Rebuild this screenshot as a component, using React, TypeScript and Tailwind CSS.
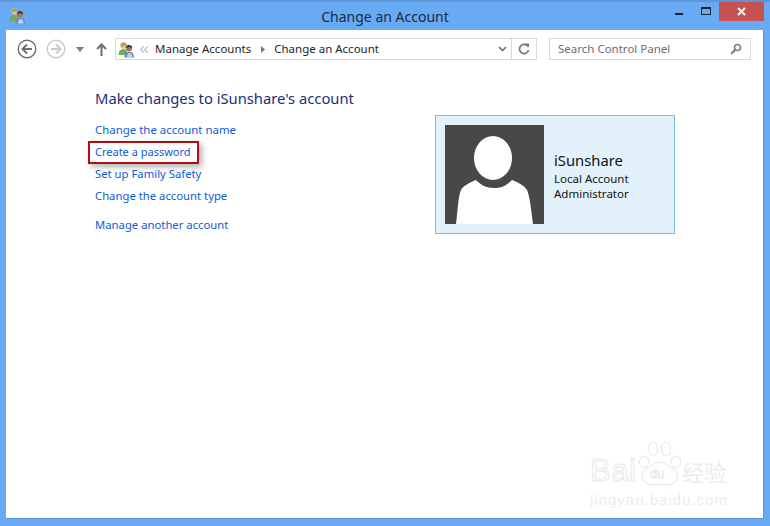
import React from "react";

const FONT = "font-['Noto_Sans','Open_Sans',sans-serif]";

// two little users, used in the title bar and in the address bar
const UsersIcon = () => (
  <svg width="17" height="17" viewBox="0 0 17 17" className="shrink-0">
    <circle cx="5.5" cy="4.5" r="3.2" fill="#d9c48a" />
    <path d="M2.5 4 Q5 -0.5 8.5 3 L8.5 5 Q5.5 3 3.5 6 Z" fill="#a89a5a" />
    <path d="M0.5 14 Q0.5 8 5.5 8 Q8 8 9 10 L8 14 Z" fill="#6fae5a" />
    <circle cx="11" cy="7" r="3.2" fill="#a9714e" />
    <path d="M7.8 6.5 Q11 2 14.2 6.5 L13.5 7 Q11 5 8.5 7 Z" fill="#3b2a20" />
    <path d="M6.5 16.5 Q6 10.5 11 10.5 Q16 10.5 16 16.5 Z" fill="#5f8fc0" />
    <path d="M9 16.5 Q9 12 11.5 12 Q14.5 12 14.5 16.5 Z" fill="#b9d3ea" />
  </svg>
);

const NavCircle = ({ color }: { color: string }) => (
  <svg width="20" height="20" viewBox="0 0 20 20">
    <circle cx="10" cy="10" r="8.75" fill="none" stroke={color} strokeWidth="1.4" />
  </svg>
);

const Link = ({ children, size = "text-[11.3px]" }: { children: React.ReactNode; size?: string }) => (
  <a className={`block ${size} leading-[16px] text-[#0e5cd8] whitespace-nowrap`}>{children}</a>
);

export default function App() {
  return (
    <div className={`${FONT} relative w-[770px] h-[526px] bg-[#69aaf5] border-t-2 border-[#5f94d8] flex flex-col overflow-hidden`}>
      {/* title bar */}
      <div className="relative h-[28px] shrink-0 flex items-center justify-center">
        <div className="absolute left-[9px] top-[5px]">
          <UsersIcon />
        </div>
        <span className="text-[14px] leading-[20px] text-[#1b2a3d] pt-[1px]">Change an Account</span>
        <div className="absolute right-[6px] top-[-1px] flex items-start">
          <div className="w-[8px] h-[2px] bg-[#20242a] mt-[12px] mr-[18px]" />
          <div className="w-[10px] h-[8px] border border-t-2 border-[#20242a] mt-[6px] mr-[8px]" />
          <div className="w-[45px] h-[20px] bg-[#c75050] flex items-center justify-center">
            <svg width="9" height="9" viewBox="0 0 9 9">
              <path d="M1 1 L8 8 M8 1 L1 8" stroke="#fff" strokeWidth="2" />
            </svg>
          </div>
        </div>
      </div>

      {/* window body */}
      <div className="flex-1 ml-[6px] mb-[7px] mr-[6px] bg-white border border-[#5f94d8] border-t-0 border-l-0 min-h-0 flex flex-col">
        {/* toolbar */}
        <div className="h-[30px] mt-[4px] shrink-0 flex items-center">
          <div className="relative ml-[11px] w-[20px] h-[20px]">
            <NavCircle color="#6f6f6f" />
            <svg width="20" height="20" viewBox="0 0 20 20" className="absolute left-0 top-0">
              <path d="M15 10 H6 M10 5.5 L5.5 10 L10 14.5" fill="none" stroke="#6f6f6f" strokeWidth="2" />
            </svg>
          </div>
          <div className="relative ml-[9px] w-[20px] h-[20px]">
            <NavCircle color="#c9c9c9" />
            <svg width="20" height="20" viewBox="0 0 20 20" className="absolute left-0 top-0">
              <path d="M5 10 H14 M10 5.5 L14.5 10 L10 14.5" fill="none" stroke="#c9c9c9" strokeWidth="2" />
            </svg>
          </div>
          <svg width="8" height="5" viewBox="0 0 8 5" className="ml-[10px]">
            <path d="M0 0 H8 L4 5 Z" fill="#7a7a7a" />
          </svg>
          <svg width="11" height="13" viewBox="0 0 11 13" className="ml-[12px]">
            <path d="M5.5 13 V2 M1 6 L5.5 1.5 L10 6" fill="none" stroke="#6f6f6f" strokeWidth="2" />
          </svg>

          {/* address bar */}
          <div className="ml-[8px] w-[422px] h-[22px] border border-[#d9d9d9] flex items-center text-[11.5px] text-[#1e1e1e]">
            <div className="ml-[2px]">
              <UsersIcon />
            </div>
            <svg width="8" height="7" viewBox="0 0 8 7" className="ml-[5px]">
              <path d="M3.5 0.5 L0.8 3.5 L3.5 6.5 M7.5 0.5 L4.8 3.5 L7.5 6.5" fill="none" stroke="#8a8a8a" />
            </svg>
            <span className="ml-[7px] whitespace-nowrap">Manage Accounts</span>
            <svg width="4" height="7" viewBox="0 0 4 7" className="ml-[10px]">
              <path d="M0 0 L4 3.5 L0 7 Z" fill="#777" />
            </svg>
            <span className="ml-[9px] whitespace-nowrap">Change an Account</span>
            <div className="ml-auto flex items-center h-full">
              <svg width="9" height="6" viewBox="0 0 9 6" className="mr-[4px]">
                <path d="M1 1 L4.5 4.5 L8 1" fill="none" stroke="#6f6f6f" strokeWidth="1.6" />
              </svg>
              <div className="w-[25px] h-full border-l border-[#d9d9d9] flex items-center justify-center">
                <svg width="12" height="12" viewBox="0 0 12 12">
                  <path d="M10 3.5 A4.6 4.6 0 1 0 10.6 7" fill="none" stroke="#7a7a7a" strokeWidth="1.7" />
                  <path d="M7 0.5 H11 V4.5 Z" fill="#7a7a7a" />
                </svg>
              </div>
            </div>
          </div>

          {/* search */}
          <div className="ml-[12px] w-[202px] h-[22px] border border-[#d9d9d9] flex items-center justify-between text-[11.5px] text-[#6d6d6d] pl-[8px] pr-[8px]">
            <span className="whitespace-nowrap">Search Control Panel</span>
            <svg width="12" height="12" viewBox="0 0 12 12">
              <circle cx="7.5" cy="4.5" r="3" fill="none" stroke="#7d7d7d" strokeWidth="1.6" />
              <path d="M5.2 6.8 L1.2 10.8" stroke="#7d7d7d" strokeWidth="2.2" />
            </svg>
          </div>
        </div>

        {/* content */}
        <div className="flex-1 flex items-start pl-[89px] pt-[23px]">
          <div className="w-[340px]">
            <h1 className="text-[14.75px] leading-[22px] font-normal text-[#1d2c7c] whitespace-nowrap">
              Make changes to iSunshare's account
            </h1>
            <div className="mt-[13px] flex flex-col">
              <Link size="text-[11.45px]">Change the account name</Link>
              <div className="relative mt-[6px]">
                <Link size="text-[11px]">Create a password</Link>
                <div className="absolute left-[-7px] top-[-3px] w-[111px] h-[23px] border-2 border-[#b00f14] shadow-[3px_3px_6px_rgba(0,0,0,0.3)]" />
              </div>
              <div className="mt-[6px]">
                <Link>Set up Family Safety</Link>
              </div>
              <div className="mt-[6px]">
                <Link>Change the account type</Link>
              </div>
              <div className="mt-[13px]">
                <Link>Manage another account</Link>
              </div>
            </div>
          </div>

          {/* account tile */}
          <div className="mt-[28px] w-[240px] h-[119px] bg-[#e3f2fa] border border-[#7bbde2] flex items-center pl-[9px]">
            <svg width="99" height="99" viewBox="0 0 99 99" className="shrink-0">
              <rect width="99" height="99" fill="#484848" />
              <path
                d="M11 99 C13 84 13 72 16 65 C19 60 26 57 31 55 C36 60 41 63 49 63 C57 63 62 60 67 55 C72 57 79 60 82 65 C85 72 86 84 88 99 Z"
                fill="#fff"
              />
              <ellipse cx="48" cy="33" rx="19" ry="22" fill="#fff" />
            </svg>
            <div className="ml-[10px] pt-[1px] text-[#111] whitespace-nowrap">
              <div className="text-[14.8px] leading-[20px]">iSunshare</div>
              <div className="text-[11.5px] leading-[15px] mt-[1px]">Local Account</div>
              <div className="text-[11.5px] leading-[15px]">Administrator</div>
            </div>
          </div>
        </div>
      </div>

      {/* watermark */}
      <div className="absolute left-[590px] top-[439px] flex flex-col items-start select-none">
        <div className="flex items-end">
          <span className="font-['Liberation_Sans',sans-serif] text-[31px] leading-[30px] tracking-[0.5px] text-transparent [-webkit-text-stroke:1px_#e8e8e8]">Bai</span>
          <svg width="44" height="46" viewBox="0 0 44 46" className="ml-[2px] mb-[-1px]">
            <g fill="none" stroke="#e6e6e6" strokeWidth="1">
              <ellipse cx="6" cy="21" rx="4.5" ry="6" />
              <ellipse cx="15" cy="8" rx="4.5" ry="7" />
              <ellipse cx="28" cy="8" rx="4.5" ry="7" />
              <ellipse cx="38" cy="21" rx="4.5" ry="6" />
              <path d="M4 38 Q3 30 13 25 Q22 17 31 25 Q42 31 39 39 Q35 46 22 43 Q8 46 4 38 Z" />
            </g>
            <text x="12" y="37" fontSize="13" fill="none" stroke="#e2e2e2" strokeWidth="0.6" fontFamily="Liberation Sans, sans-serif">du</text>
          </svg>
          <span className="text-[22px] leading-[30px] font-['Noto_Sans_CJK_SC',sans-serif] text-[#ececec]">经验</span>
        </div>
        <span className="font-['Liberation_Sans',sans-serif] text-[15px] leading-[16px] tracking-[1px] mt-[6px] text-[#ececec]">jingyan.baidu.com</span>
      </div>
    </div>
  );
}
